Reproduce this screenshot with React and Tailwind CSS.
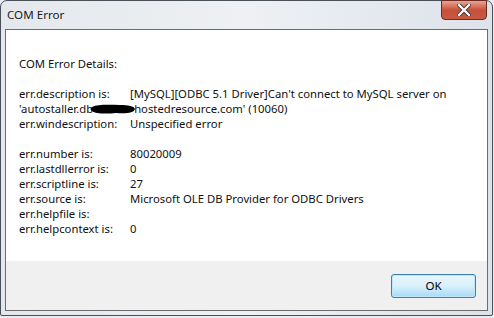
import React from "react"

const rows = [
  ["err.number is:", "80020009"],
  ["err.lastdllerror is:", "0"],
  ["err.scriptline is:", "27"],
  ["err.source is:", "Microsoft OLE DB Provider for ODBC Drivers"],
  ["err.helpfile is:", ""],
  ["err.helpcontext is:", "0"],
]

const Row = ({ label, value }) => (
  <div className="flex h-[15px] items-center">
    <span className="w-[111px] shrink-0">{label}</span>
    <span>{value}</span>
  </div>
)

const App = () => {
  return (
    <div
      className="w-[494px] h-[318px] bg-[#e9edf1] overflow-hidden text-[11.3px] text-black"
      style={{ fontFamily: '"Noto Sans", "Open Sans", sans-serif' }}
    >
      <div className="w-[493px] h-[316px] rounded-t-[7px] rounded-b-[2px] border border-[#4a5058] bg-gradient-to-r from-[#e4e8ec] via-[#eef0f3] to-[#dde3ea] flex flex-col relative">
        {/* title bar */}
        <div className="h-[28px] flex items-start justify-between pl-[6px]">
          <span className="mt-[7px] text-[11.6px] leading-[14px] text-[#1a1a1a]">COM Error</span>
          <div className="mr-[5px] -mt-px w-[46px] h-[20px] rounded-b-[4px] border border-[#6b2a22] bg-gradient-to-b from-[#e9a493] via-[#c8503a] to-[#c45a44] flex items-center justify-center">
            <svg width="14" height="12" viewBox="0 0 14 12">
              <path
                d="M2 1 L12 11 M12 1 L2 11"
                stroke="#3a3a3a"
                strokeWidth="4"
                strokeLinecap="square"
              />
              <path
                d="M2 1 L12 11 M12 1 L2 11"
                stroke="#ffffff"
                strokeWidth="2.2"
                strokeLinecap="square"
              />
            </svg>
          </div>
        </div>

        {/* client area */}
        <div className="mx-[4px] mb-[4px] flex-1 border border-[#6c6c6c] flex flex-col">
          <div className="flex-1 bg-white pl-[13px] pt-[26px] leading-[14px] text-[#111]">
            <div className="h-[15px] flex items-center">COM Error Details:</div>
            <div className="h-[15px]" />
            <Row label="err.description is:" value="[MySQL][ODBC 5.1 Driver]Can't connect to MySQL server on" />
            <div className="h-[15px] flex items-center">
              <span>'autostaller.db</span>
              <svg width="46" height="12" viewBox="0 0 46 12" className="-ml-[3px] -mr-[2px]">
                <path
                  d="M2 4 C8 1 20 2 30 2 C38 2 44 3 45 6 C44 10 36 11 26 10 C16 11 6 11 2 8 C0 7 0 5 2 4 Z"
                  fill="#000"
                />
              </svg>
              <span>hostedresource.com' (10060)</span>
            </div>
            <Row label="err.windescription:" value="Unspecified error" />
            <div className="h-[15px]" />
            {rows.map(([l, v]) => (
              <Row key={l} label={l} value={v} />
            ))}
          </div>
          <div className="h-[49px] bg-[#f0f0f0] flex items-center justify-end pr-[11px]">
            <button className="w-[85px] h-[24px] rounded-[3px] border border-[#3c7fb1] bg-gradient-to-b from-[#eaf6fd] via-[#d9f0fc] to-[#a7d9f5] shadow-[inset_0_0_0_1px_#bde6fd] text-[11.6px] text-black">
              OK
            </button>
          </div>
        </div>
      </div>
    </div>
  )
}

export default App
